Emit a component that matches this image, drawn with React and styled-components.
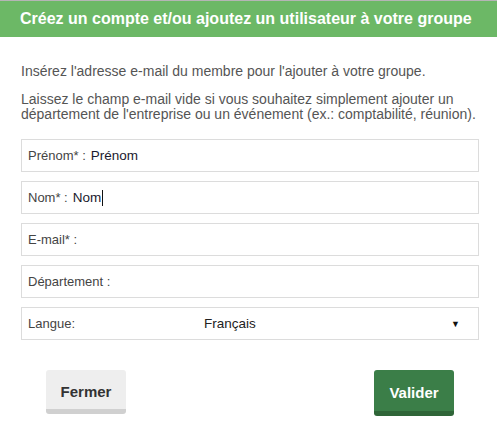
import styled, { createGlobalStyle } from "styled-components";

const Global = createGlobalStyle`
  body {
    margin: 0;
    background: #fff;
    font-family: "Liberation Sans", Arial, sans-serif;
  }
`;

const fields = [
  { label: "Prénom* :", value: "Prénom" },
  { label: "Nom* :", value: "Nom", caret: true },
  { label: "E-mail* :", value: "" },
  { label: "Département :", value: "" },
];

const App = () => {
  return (
    <>
      <Global />
      <Dialog>
        <Header>Créez un compte et/ou ajoutez un utilisateur à votre groupe</Header>
        <Body>
          <Info>Insérez l'adresse e-mail du membre pour l'ajouter à votre groupe.</Info>
          <Info>
            Laissez le champ e-mail vide si vous souhaitez simplement ajouter un
            département de l'entreprise ou un événement (ex.: comptabilité, réunion).
          </Info>
          <Form>
            {fields.map((f) => (
              <Field key={f.label}>
                <Label>{f.label}</Label>
                <Value>
                  {f.value}
                  {f.caret && <Caret />}
                </Value>
              </Field>
            ))}
            <Field>
              <Label>Langue:</Label>
              <SelectValue>Français</SelectValue>
              <Arrow>▼</Arrow>
            </Field>
          </Form>
          <Actions>
            <Button>Fermer</Button>
            <Button primary>Valider</Button>
          </Actions>
        </Body>
      </Dialog>
    </>
  );
};

const Dialog = styled.div`
  width: 497px;
  border-top: 1px solid #b5b5b5;
`;
const Header = styled.div`
  background: #6cb866;
  color: #fff;
  font-weight: bold;
  font-size: 16px;
  height: 36px;
  line-height: 36px;
  padding-left: 20px;
  white-space: nowrap;
`;
const Body = styled.div`
  padding: 27px 18px 0 21px;
`;
const Info = styled.p`
  margin: 0 0 13px;
  font-size: 14px;
  line-height: 15px;
  color: #555;
`;
const Form = styled.div`
  display: flex;
  flex-direction: column;
  gap: 9px;
  margin-top: 17px;
`;
const Field = styled.div`
  display: flex;
  align-items: center;
  height: 31px;
  border: 1px solid #dcdcdc;
  padding: 0 18px 0 6px;
  font-size: 13px;
`;
const Label = styled.span`
  color: #444;
  margin-right: 5px;
`;
const Value = styled.span`
  color: #1a1a2e;
  font-size: 13.5px;
  display: flex;
  align-items: center;
`;
const Caret = styled.span`
  display: inline-block;
  width: 1px;
  height: 16px;
  background: #111;
  margin-left: 1px;
`;
const SelectValue = styled.span`
  color: #222;
  font-size: 13.5px;
  margin-left: 124px;
  flex: 1;
`;
const Arrow = styled.span`
  font-size: 9px;
  color: #111;
`;
const Actions = styled.div`
  display: flex;
  justify-content: space-between;
  align-items: flex-start;
  padding: 30px 25px 0 25px;
`;
const Button = styled.button`
  width: 80px;
  height: ${(p) => (p.primary ? "46px" : "44px")};
  border: none;
  border-radius: 3px;
  border-bottom: 5px solid ${(p) => (p.primary ? "#2f6538" : "#d0d0d0")};
  background: ${(p) => (p.primary ? "#3b7e48" : "#eeeeee")};
  color: ${(p) => (p.primary ? "#fff" : "#333")};
  font-family: "Liberation Sans", Arial, sans-serif;
  font-weight: bold;
  font-size: 15px;
  padding: 0;
  padding-top: 4px;
`;

export default App;
